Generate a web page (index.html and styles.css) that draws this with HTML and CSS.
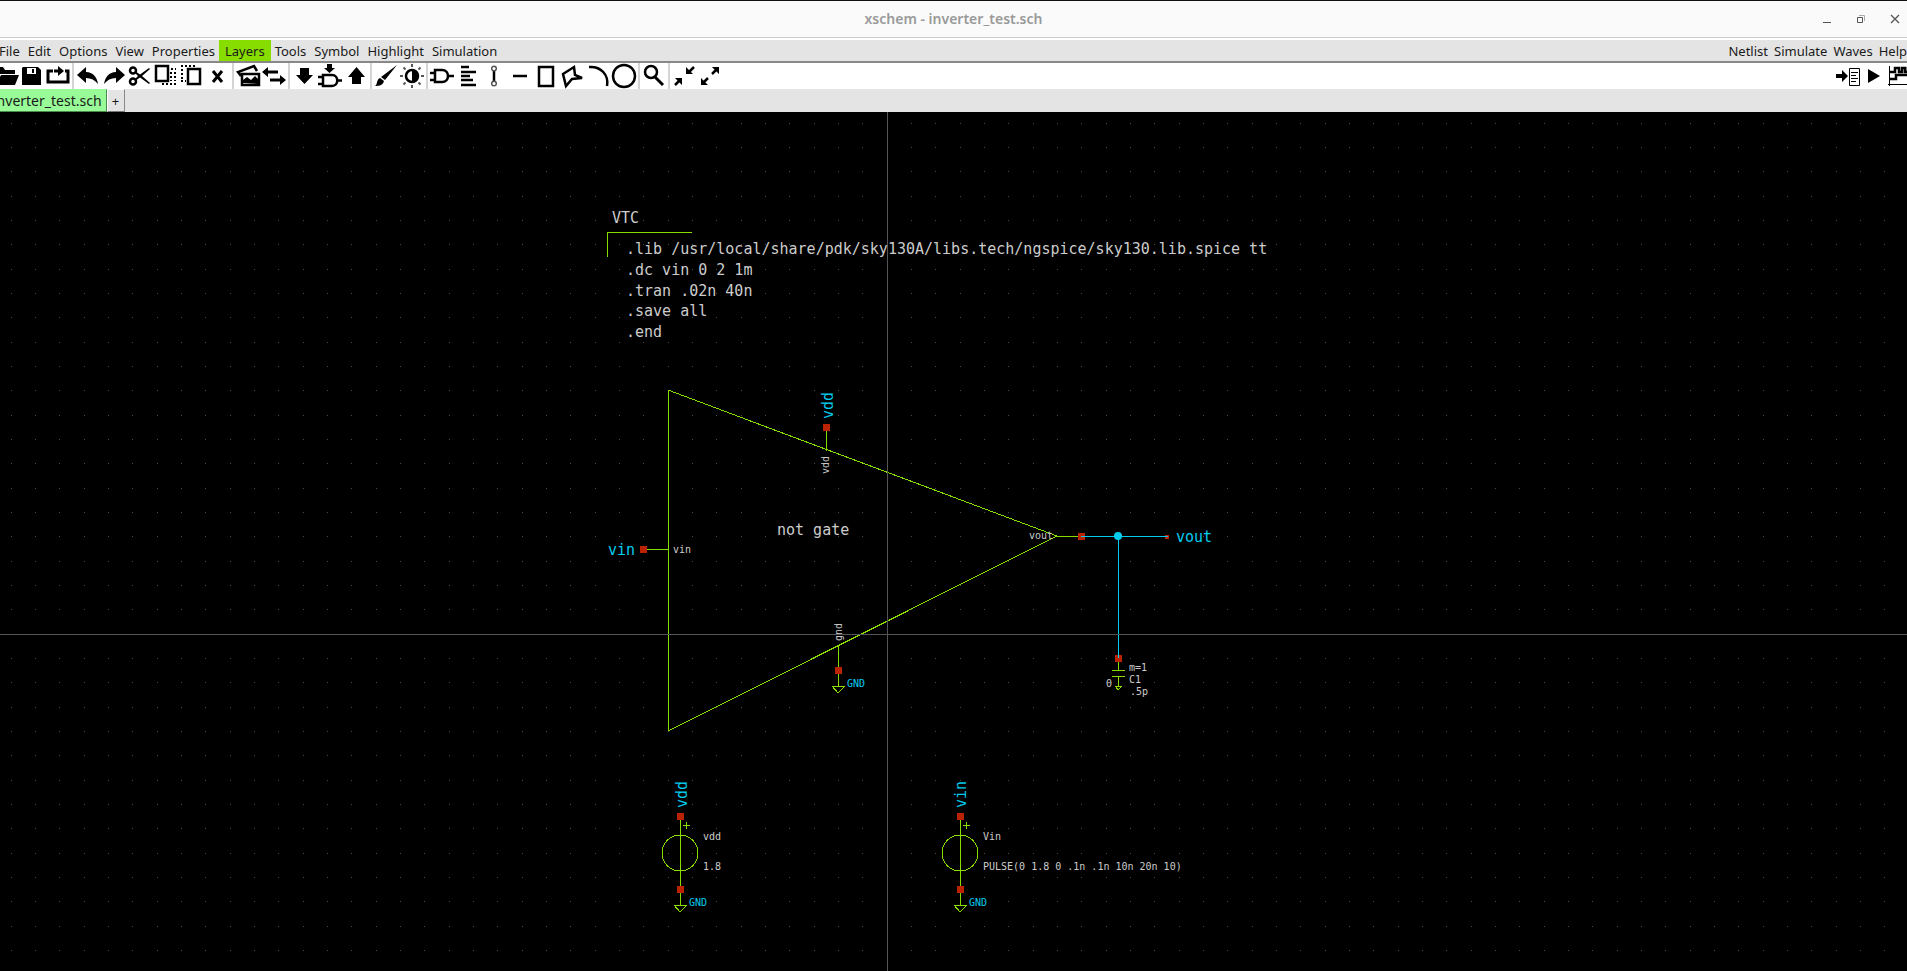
FILE: index.html
```html
<!DOCTYPE html>
<html lang="en">
<head>
<meta charset="utf-8">
<title>xschem - inverter_test.sch</title>
<link rel="stylesheet" href="styles.css">
</head>
<body>
<header class="titlebar">
  <h1 class="title">xschem - inverter_test.sch</h1>
  <div class="window-controls">
    <button aria-label="Minimize"><svg width="10" height="10"><path d="M1 8.500h8" stroke="#555"/></svg></button>
    <button aria-label="Restore"><svg width="10" height="10" fill="none"><path d="M3 1.500h5.500V7" stroke="#aaa"/><path d="M1.500 3.500h5v5h-5z" stroke="#555"/></svg></button>
    <button aria-label="Close"><svg width="10" height="10"><path d="M1 1l8 8M9 1l-8 8" stroke="#555" stroke-width="1.300"/></svg></button>
  </div>
</header>

<nav class="menubar">
  <div class="menus">
    <button>File</button><button>Edit</button><button>Options</button><button>View</button><button>Properties</button><button class="active">Layers</button><button>Tools</button><button>Symbol</button><button>Highlight</button><button>Simulation</button>
  </div>
  <div class="menus actions">
    <button>Netlist</button><button>Simulate</button><button>Waves</button><button>Help</button>
  </div>
</nav>

<div class="toolbar">
  <div class="tools">
    <div class="group">
      <button aria-label="Open"><svg class="icon" viewBox="0 0 26 26"><path d="M2 4h8l2 3h10v4H7L3 20z"/><path d="M8 12h18l-4 10H3z"/></svg></button>
      <button aria-label="Save"><svg class="icon" viewBox="0 0 26 26"><path d="M4 4h15l3 3v15H3V5z"/><path d="M8 5h9v6H8z" fill="#fff"/><path d="M13 6h2v4h-2z"/></svg></button>
      <button aria-label="Reload"><svg class="icon" viewBox="0 0 26 26"><path class="s3" d="M8 8H3v11h20V8h-3M9 8h5"/><path d="M13 3l6 5-6 5z"/></svg></button>
    </div>
    <div class="group">
      <button aria-label="Undo"><svg class="icon" viewBox="0 0 26 26"><path d="M2 12l9-8v5c7 0 11 5 12 12-3-4-7-6-12-6v5z"/></svg></button>
      <button aria-label="Redo"><svg class="icon" viewBox="0 0 26 26"><path d="M24 12l-9-8v5c-7 0-11 5-12 12 3-4 7-6 12-6v5z"/></svg></button>
      <button aria-label="Cut"><svg class="icon" viewBox="0 0 26 26"><circle class="s2" cx="6" cy="7.500" r="3"/><circle class="s2" cx="6" cy="18.500" r="3"/><path d="M8 8l5 3.500L22 5l1 1-8 7 8 7-1 1-9-6.500L8 18v-2l3-3-3-3z"/></svg></button>
      <button aria-label="Copy"><svg class="icon" viewBox="0 0 26 26"><path class="s2" d="M3 3h12v15H3z"/><path class="dots" d="M18 6h5M22 9v9M18 9v9M9 21h14"/></svg></button>
      <button aria-label="Move"><svg class="icon" viewBox="0 0 26 26"><path class="s2" d="M9 6h12v15H9z"/><path class="dots" d="M2 3h14M3 6v13M2 18h5"/></svg></button>
      <button aria-label="Delete"><svg class="icon" viewBox="0 0 26 26"><path class="s3" d="M8 8l9 11M17 8L8 19"/></svg></button>
    </div>
    <div class="group">
      <button aria-label="Load most recent"><svg class="icon" viewBox="0 0 26 26"><path class="s2" d="M7 11h17v11H7zM6 13L3 9l16-6 3 5"/><path d="M8 20v-3l4-3 4 3 4-4 3 3v5z"/></svg></button>
      <button aria-label="Swap"><svg class="icon" viewBox="0 0 26 26"><path d="M1 9l6-5v3.500h10v3H7V14zM25 17l-6-5v3.500H9v3h10V22z"/></svg></button>
    </div>
    <div class="group">
      <button aria-label="Descend"><svg class="icon" viewBox="0 0 26 26"><path d="M9 5h9v7h4l-8.500 9L5 12h4z"/></svg></button>
      <button aria-label="Descend symbol"><svg class="icon" viewBox="0 0 26 26"><path class="s2" d="M6 12h9c7 0 7 11 0 11H6zM1 14h5M1 21h5M20 17.500h5"/><path d="M10 1h5v4h3l-5.500 5L7 5h3z"/></svg></button>
      <button aria-label="Go back"><svg class="icon" viewBox="0 0 26 26"><path d="M9 21h9v-7h4L13.500 4 5 14h4z"/></svg></button>
    </div>
    <div class="group">
      <button aria-label="Highlight"><svg class="icon" viewBox="0 0 26 26"><path d="M24 2L12 17l-4-3zM7 15l4 3c-1 4-4 5-9 5 3-2 1-6 5-8z"/></svg></button>
      <button aria-label="Toggle colors"><svg class="icon" viewBox="0 0 26 26"><circle class="s2" cx="13" cy="13" r="6"/><path d="M13 7a6 6 0 0 1 0 12z"/><path class="rays" d="M13 1v3M13 22v3M1 13h3M22 13h3M4.500 4.500l2 2M19.500 19.500l2 2M21.500 4.500l-2 2M4.500 21.500l2-2"/></svg></button>
    </div>
    <div class="group">
      <button aria-label="Insert symbol"><svg class="icon" viewBox="0 0 26 26"><path class="s2" d="M6 7h7c8 0 8 12 0 12H6zM1 10h5M1 17h5M20 13h5"/></svg></button>
      <button aria-label="Insert text"><svg class="icon" viewBox="0 0 26 26"><path class="s2" d="M6 4h8M6 9h15M6 13h9M6 17h12M6 22h15"/></svg></button>
      <button aria-label="Insert wire"><svg class="icon" viewBox="0 0 26 26"><path class="s2" d="M13 8v10"/><circle class="ring" cx="13" cy="5.500" r="2.300"/><circle class="ring" cx="13" cy="20.500" r="2.300"/></svg></button>
      <button aria-label="Insert line"><svg class="icon" viewBox="0 0 26 26"><path class="s2" d="M6 13h14"/></svg></button>
      <button aria-label="Insert rectangle"><svg class="icon" viewBox="0 0 26 26"><path class="s2" d="M6 4h14v19H6z"/></svg></button>
      <button aria-label="Insert polygon"><svg class="icon" viewBox="0 0 26 26"><path class="s2" d="M4 11l11-7 1 8 7 3-10 1-6 7z"/></svg></button>
      <button aria-label="Insert arc"><svg class="icon" viewBox="0 0 26 26"><path class="s2" d="M4 4c12-1 20 8 18 19"/></svg></button>
      <button aria-label="Insert circle"><svg class="icon" viewBox="0 0 26 26"><circle class="s2" cx="13" cy="13" r="11"/></svg></button>
    </div>
    <div class="group">
      <button aria-label="Search"><svg class="icon" viewBox="0 0 26 26"><circle class="s2" cx="10" cy="9" r="6"/><path class="s3" d="M14 14l8 8"/></svg></button>
    </div>
    <div class="group">
      <button aria-label="Zoom out"><svg class="icon" viewBox="0 0 26 26"><path class="s2" d="M23 4l-5 5M4 22l5-5"/><path d="M15 4v7h7zM11 22v-7H4z"/></svg></button>
      <button aria-label="Zoom full"><svg class="icon" viewBox="0 0 26 26"><path class="s2" d="M15 11l5-5M11 15l-5 5"/><path d="M15 4h7v7zM4 15v7h7z"/></svg></button>
    </div>
  </div>
  <div class="tools run">
    <button aria-label="Netlist"><svg class="icon" viewBox="0 0 26 26"><path d="M2 11h6V7l6 6-6 6v-4H2z"/><path class="s1" d="M15.500 5.500h10v17h-10zM17 9.500h7M17 12.500h5M17 15.500h7M17 18.500h5"/></svg></button>
    <button aria-label="Simulate"><svg class="icon" viewBox="0 0 26 26"><path d="M8 6l12 7-12 7z"/></svg></button>
    <button aria-label="Waves"><svg class="icon" viewBox="0 0 26 26"><path class="s1" d="M3.500 3v20M2 21.500h24"/><path class="s2" d="M4 9h5V5h4v4h3V5h3v4h3V5h4M4 16h6v-4h16"/></svg></button>
  </div>
</div>

<div class="tabs">
  <button class="tab current">inverter_test.sch</button>
  <button class="tab add" aria-label="New tab">+</button>
</div>

<main class="sheet">
  <svg class="schematic" width="100%" height="100%">
    <defs>
      <pattern id="grid" x="11" y="11" width="73" height="73" patternUnits="userSpaceOnUse">
        <path class="dot" d="M0 0h1v1H0zM24 0h1v1h-1zM48 0h1v1h-1zM0 24h1v1H0zM24 24h1v1h-1zM48 24h1v1h-1zM0 48h1v1H0zM24 48h1v1h-1zM48 48h1v1h-1z"/>
      </pattern>
      <g id="pin"><rect class="pin" x="-3" y="-3" width="7" height="7"/></g>
      <g id="ground"><path class="symbol" d="M-6 0H7L0 7z"/><text class="net small" x="9" y="1">GND</text></g>
      <g id="source">
        <circle class="symbol round" cx="0" cy="0" r="18"/>
        <path class="symbol" d="M0 -34V52M3 -28h7M6 -31v7"/>
        <use href="#pin" y="-37"/><use href="#pin" y="36"/><use href="#ground" y="52"/>
      </g>
    </defs>
    <rect width="100%" height="100%" fill="url(#grid)"/>

    <g class="label">
      <text x="612" y="111">VTC</text>
      <text x="626" y="142">.lib /usr/local/share/pdk/sky130A/libs.tech/ngspice/sky130.lib.spice tt</text>
      <text x="626" y="163">.dc vin 0 2 1m</text>
      <text x="626" y="184">.tran .02n 40n</text>
      <text x="626" y="204">.save all</text>
      <text x="626" y="225">.end</text>
      <text x="777" y="423">not gate</text>
    </g>
    <path class="symbol" d="M607 145V120H692"/>

    <path class="symbol" d="M668 278V619L1057 424zM647 437H668M826 319V339M838 534V574M1057 424H1078"/>
    <use href="#pin" x="643" y="437"/>
    <use href="#pin" x="826" y="315"/>
    <use href="#pin" x="838" y="558"/>
    <use href="#pin" x="1081" y="424"/>
    <use href="#ground" x="838" y="574"/>
    <text class="net" x="608" y="443">vin</text>
    <text class="net" transform="translate(833 307) rotate(-90)">vdd</text>
    <text class="net" x="1176" y="430">vout</text>
    <text class="label small" x="673" y="441">vin</text>
    <text class="label small" transform="translate(829 362) rotate(-90)">vdd</text>
    <text class="label small" transform="translate(842 529) rotate(-90)">gnd</text>
    <text class="label small" x="1029" y="427">vout</text>

    <rect class="pin" x="1165" y="423" width="4" height="4"/>
    <path class="symbol" d="M1118 550V558M1112 558H1125M1112 564H1125M1118 564V574M1115 574H1122L1118 578z"/>
    <use href="#pin" x="1118" y="546"/>
    <path class="wire" d="M1081 424H1168M1118 424V546"/>
    <circle class="node" cx="1118" cy="424" r="4"/>
    <text class="label small" x="1129" y="559">m=1</text>
    <text class="label small" x="1129" y="571">C1</text>
    <text class="label small" x="1130" y="583">.5p</text>
    <text class="label small" x="1106" y="575">0</text>

    <use href="#source" x="680" y="741"/>
    <text class="net" transform="translate(687 696) rotate(-90)">vdd</text>
    <text class="label small" x="703" y="728">vdd</text>
    <text class="label small" x="703" y="758">1.8</text>

    <use href="#source" x="960" y="741"/>
    <text class="net" transform="translate(966 696) rotate(-90)">vin</text>
    <text class="label small" x="983" y="728">Vin</text>
    <text class="label small" x="983" y="758">PULSE(0 1.8 0 .1n .1n 10n 20n 10)</text>

    <rect class="cursor" x="887" y="0" width="1" height="100%"/>
    <rect class="cursor" x="0" y="522" width="100%" height="1"/>
  </svg>
</main>
</body>
</html>
```
FILE: styles.css
```css
* { box-sizing: border-box; }

body {
  margin: 0;
  height: 100vh;
  display: flex;
  flex-direction: column;
  overflow: hidden;
  background: #fff;
  color: #1a1a1a;
  font: 13px/20px "Noto Sans", sans-serif;
}

button {
  margin: 0;
  padding: 0;
  border: 0;
  background: none;
  color: inherit;
  font: inherit;
  white-space: nowrap;
}

.titlebar {
  display: grid;
  grid-template-columns: 1fr auto 1fr;
  align-items: center;
  height: 38px;
  border-top: 1px solid #111;
  border-bottom: 1px solid #ccc;
  background: #fafafa;
}

.title {
  grid-column: 2;
  margin: 0;
  color: #999;
  font-size: 14px;
  font-weight: 600;
}

.window-controls {
  display: flex;
  justify-self: end;
  margin-right: -5px;
}

.window-controls button {
  display: grid;
  place-items: center;
  width: 34px;
  height: 34px;
}

.menubar {
  display: flex;
  justify-content: space-between;
  margin-top: 2px;
  border-bottom: 2px solid #888;
  background: #e4e4e4;
}

.menus { display: flex; margin-left: -5px; }
.menus button { padding: 1px 4px 0; }
.menus .active { padding: 1px 6px 0; background: #88dd00; }
.actions { margin-right: -3px; }
.actions button { padding: 1px 3px 0; }

.toolbar {
  display: flex;
  justify-content: space-between;
  height: 26px;
}

.tools { display: flex; margin-left: -8px; }
.run { margin-right: -5px; }
.group { display: flex; padding: 0 1px; }
.group + .group { border-left: 2px solid #d4d4d4; }

.tools button { width: 26px; height: 26px; }

.icon { display: block; width: 26px; height: 26px; fill: #000; }
.icon .s1, .icon .s2, .icon .s3, .icon .dots, .icon .rays, .icon .ring { fill: none; stroke: #000; }
.icon .s1 { stroke-width: 1; }
.icon .s2 { stroke-width: 2.500; }
.icon .s3 { stroke-width: 3; }
.icon .dots { stroke-width: 2; stroke-dasharray: 2 2; }
.icon .rays { stroke: #555; stroke-width: 2; }
.icon .ring { stroke: #555; stroke-width: 1.500; }

.tabs {
  display: flex;
  height: 23px;
  background: #e4e4e4;
}

.tab {
  border: 1px solid;
  border-color: #fff #888 #777 #fff;
  line-height: 20px;
}

.current {
  margin-left: -12px;
  padding: 0 4px;
  border-color: #98fb98 #4a8a4a #4a8a4a #98fb98;
  background: #98fb98;
  font-size: 14px;
}

.add { width: 18px; }

.sheet { flex: 1; min-height: 0; background: #000; }

.schematic {
  display: block;
  font: 15px "DejaVu Sans Mono", monospace;
}

.schematic .small { font-size: 10px; }
.label { fill: #ccc; }
.net { fill: #00ccee; }
.dot { fill: #4a4a4a; }
.cursor { fill: #555; }
.pin { fill: #bb2200; shape-rendering: crispEdges; }
.node { fill: #00ccee; }
.symbol { fill: none; stroke: #88dd00; shape-rendering: crispEdges; }
.wire { fill: none; stroke: #00ccee; shape-rendering: crispEdges; }
```
